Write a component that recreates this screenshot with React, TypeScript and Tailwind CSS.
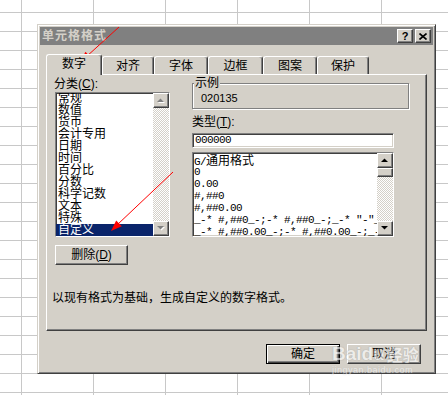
const raised =
  'border border-t-white border-l-white border-r-[#404040] border-b-[#404040] shadow-[inset_-1px_-1px_0_#808080] bg-[#d4d0c8]';
const sunken =
  'border border-t-[#808080] border-l-[#808080] border-r-white border-b-white shadow-[inset_1px_1px_0_#404040,inset_-1px_-1px_0_#d4d0c8]';
const checker =
  'bg-[repeating-conic-gradient(#ffffff_0%_25%,#d4d0c8_0%_50%)] bg-size-[2px_2px]';

const CATEGORIES = ['常规', '数值', '货币', '会计专用', '日期', '时间', '百分比', '分数', '科学记数', '文本', '特殊', '自定义'];

const FORMATS = [
  '0',
  '0.00',
  '#,##0',
  '#,##0.00',
  '_-* #,##0_-;-* #,##0_-;_-* "-"_-;_-@_-',
  '_-* #,##0.00_-;-* #,##0.00_-;_-* "-"??_-;_-@_-',
];

const TABS = [
  { label: '数字', w: 'w-[56px]', active: true },
  { label: '对齐', w: 'w-[52px]' },
  { label: '字体', w: 'w-[54px]' },
  { label: '边框', w: 'w-[55px]' },
  { label: '图案', w: 'w-[54px]' },
  { label: '保护', w: 'w-[52px]' },
];

function Arrow({ up, disabled }: { up?: boolean; disabled?: boolean }) {
  const pts = up ? '0,4 7,4 3.5,0.5' : '0,0 7,0 3.5,3.5';
  return (
    <svg width="8" height="5" viewBox="0 0 8 5">
      {disabled && <polygon points={pts} fill="#ffffff" transform="translate(1,1)" />}
      <polygon points={pts} fill={disabled ? '#808080' : '#000000'} />
    </svg>
  );
}

function ScrollBar({ disabled, thumb }: { disabled?: boolean; thumb?: boolean }) {
  return (
    <div className="w-[16px] flex flex-col">
      <div className={`${raised} h-[15px] flex items-center justify-center`}>
        <Arrow up disabled={disabled} />
      </div>
      {thumb && <div className={`${raised} h-[9px]`} />}
      <div className={`flex-1 ${checker}`} />
      <div className={`${raised} h-[15px] flex items-center justify-center`}>
        <Arrow disabled={disabled} />
      </div>
    </div>
  );
}

export default function App() {
  return (
    <div className="relative w-[448px] h-[395px] overflow-hidden bg-white bg-[linear-gradient(to_right,#c8c8c8_1px,transparent_1px),linear-gradient(to_bottom,#c8c8c8_1px,transparent_1px)] bg-size-[72px_19px] bg-position-[21px_12px] pl-[37px] pt-[24px] font-['Liberation_Sans','Noto_Sans_CJK_SC',sans-serif] text-[12px] leading-[12px] text-black">
      {/* Dialog */}
      <div className="w-[399px] h-[350px] bg-[#d4d0c8] p-[2px] border border-t-[#d4d0c8] border-l-[#d4d0c8] border-r-[#404040] border-b-[#404040] shadow-[inset_1px_1px_0_#fff,inset_-1px_-1px_0_#808080] flex flex-col">
        {/* Title bar */}
        <div className="h-[18px] bg-[#808080] flex items-center pl-[2px] pr-[2px]">
          <span className="flex-1 font-bold text-[12px] text-[#d4d0c8] tracking-[1px]">单元格格式</span>
          <div className={`${raised} w-[16px] h-[14px] flex items-center justify-center font-bold text-[11px]`}>?</div>
          <div className={`${raised} w-[16px] h-[14px] ml-[2px] flex items-center justify-center`}>
            <svg width="8" height="7" viewBox="0 0 8 7">
              <path d="M0.5 0.5 L7.5 6.5 M7.5 0.5 L0.5 6.5" stroke="#000" strokeWidth="1.6" />
            </svg>
          </div>
        </div>

        <div className="px-[6px] flex flex-col">
          {/* Tabs */}
          <div className="mt-[9px] h-[20px] flex items-end">
            {TABS.map(t => (
              <div
                key={t.label}
                className={`${t.w} ${
                  t.active ? 'h-[21px] -mb-px relative z-10 pb-[2px]' : 'h-[18px]'
                } bg-[#d4d0c8] rounded-t-[3px] border-t border-l border-r border-t-white border-l-white border-r-[#404040] shadow-[inset_-1px_0_0_#808080] flex items-center justify-center`}
              >
                {t.label}
              </div>
            ))}
          </div>

          {/* Panel */}
          <div className="h-[257px] border border-t-white border-l-white border-r-[#404040] border-b-[#404040] shadow-[inset_-1px_-1px_0_#808080] flex flex-col">
            <div className="flex pl-[8px]">
              {/* Left column */}
              <div className="w-[115px] flex flex-col">
                <div className="mt-[3px] h-[12px] -ml-px">
                  分类(<u>C</u>):
                </div>
                <div className={`${sunken} mt-[2px] h-[145px] bg-white flex`}>
                  <div className="flex-1 overflow-hidden">
                    <div className="-mt-[1px]">
                      {CATEGORIES.map((c, i) => (
                        <div
                          key={c}
                          className={`h-[12px] pl-[2px] ${
                            i === CATEGORIES.length - 1 ? 'bg-[#0a246a] text-white' : ''
                          }`}
                        >
                          {c}
                        </div>
                      ))}
                    </div>
                  </div>
                  <ScrollBar disabled />
                </div>
                <div className={`${raised} mt-[8px] w-[73px] h-[20px] flex items-center justify-center`}>
                  删除(<u>D</u>)
                </div>
              </div>

              {/* Right column */}
              <div className="ml-[22px] flex flex-col">
                <fieldset className="mt-[2px] w-[217px] border border-[#808080] shadow-[inset_1px_1px_0_#fff,1px_1px_0_#fff]">
                  <legend className="ml-[1px] px-[1px] bg-[#d4d0c8] h-[12px] leading-[12px]">示例</legend>
                  <div className="pl-[8px] pt-[3px] pb-[3px] text-[11px] leading-[13px]">020135</div>
                </fieldset>
                <div className="mt-[7px] h-[12px]">
                  类型(<u>T</u>):
                </div>
                <div className={`${sunken} mt-[5px] w-[202px] h-[15px] bg-white pl-[2px] font-['Liberation_Mono',monospace] text-[11px] tracking-[-0.6px] leading-[13px]`}>
                  000000
                </div>
                <div className={`${sunken} mt-[4px] w-[202px] h-[85px] bg-white flex`}>
                  <div className="flex-1 overflow-hidden pt-px pl-px font-['Liberation_Mono','Noto_Sans_CJK_SC',monospace] text-[11px] tracking-[-0.6px]">
                    <div className="h-[12px] leading-[12px] whitespace-nowrap">
                      G/<span className="font-['Noto_Sans_CJK_SC',sans-serif] text-[12px] tracking-normal">通用格式</span>
                    </div>
                    {FORMATS.map(f => (
                      <div key={f} className="h-[12px] leading-[12px] whitespace-nowrap">
                        {f}
                      </div>
                    ))}
                  </div>
                  <ScrollBar thumb />
                </div>
              </div>
            </div>

            <div className="mt-[27px] pl-[5px] h-[12px]">以现有格式为基础，生成自定义的数字格式。</div>
          </div>

          {/* Buttons */}
          <div className="mt-[13px] flex justify-end gap-[7px] pr-[6px]">
            <div className="w-[74px] h-[20px] bg-[#d4d0c8] border border-black shadow-[inset_1px_1px_0_#fff,inset_-1px_-1px_0_#404040,inset_-2px_-2px_0_#808080] flex items-center justify-center">
              确定
            </div>
            <div className={`${raised} w-[74px] h-[20px] flex items-center justify-center`}>取消</div>
          </div>
        </div>
      </div>

      {/* Watermark */}
      <div className="absolute left-[332px] top-[343px] flex flex-col items-start opacity-60 pointer-events-none">
        <div className="flex items-end text-[19px] leading-[22px] font-bold text-white [text-shadow:0_0_1px_#999,0_0_1px_#999]">
          <span>Bai</span>
          <span>du</span>
          <span className="ml-[2px] text-[16px] font-['Noto_Sans_CJK_SC',sans-serif]">经验</span>
        </div>
        <div className="text-[9px] leading-[10px] text-white [text-shadow:0_0_1px_#aaa] tracking-[0.5px]">jingyan.baidu.com</div>
      </div>

      {/* Red arrows */}
      <svg className="absolute left-0 top-0 pointer-events-none" width="448" height="395" viewBox="0 0 448 395">
        <line x1="119" y1="27" x2="86" y2="57" stroke="#ff0000" strokeWidth="1" />
        <polygon points="80,62 90.9,57.7 85.5,51.7" fill="#ff0000" />
        <line x1="173" y1="172" x2="117" y2="225" stroke="#ff0000" strokeWidth="1" />
        <polygon points="111,231 121.8,226.3 116.2,220.5" fill="#ff0000" />
      </svg>
    </div>
  );
}
